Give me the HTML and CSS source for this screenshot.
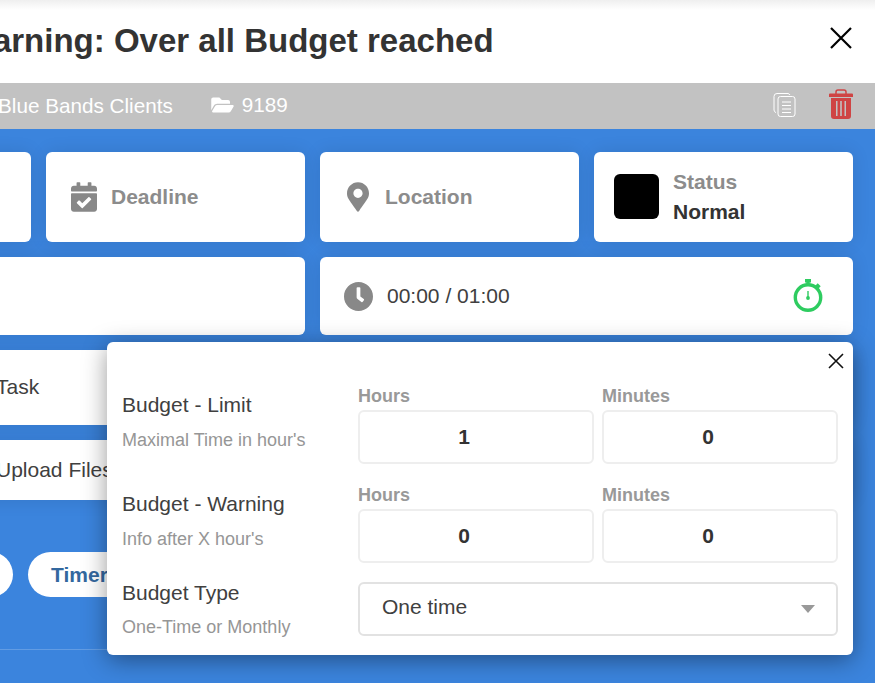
FILE: index.html
```html
<!DOCTYPE html>
<html lang="en">
<head>
<meta charset="utf-8">
<title>Warning: Over all Budget reached</title>
<link rel="stylesheet" href="styles.css">
</head>
<body>
<div class="viewport">
  <main class="modal">
    <header class="head">
      <h1 class="title">Warning: Over all Budget reached</h1>
      <svg class="close-main" viewBox="0 0 24 24"><path d="M2 2l20 20M22 2L2 22"/></svg>
    </header>
    <div class="subbar">
      <span class="client">Blue Bands Clients</span>
      <svg class="folder" viewBox="0 0 576 512"><path d="M572.694 292.093L500.27 416.248A63.997 63.997 0 0 1 444.989 448H45.025c-18.523 0-30.064-20.093-20.731-36.093l72.424-124.155A64 64 0 0 1 152 256h399.964c18.523 0 30.064 20.093 20.73 36.093zM152 224h328v-48c0-26.51-21.49-48-48-48H272l-64-64H48C21.49 64 0 85.49 0 112v278.046l69.077-118.418C86.214 242.25 117.989 224 152 224z"/></svg>
      <span class="number">9189</span>
      <svg class="copy" viewBox="0 0 23 25"><path d="M15 1.500H4a3 3 0 0 0-3 3V18a3 3 0 0 0 2 2.600M15 1.500a3 3 0 0 1 2 1.500"/><rect x="5" y="4.500" width="17" height="20" rx="2.500"/><path d="M9 10h9M9 13.500h9M9 17h9M9 20.500h9"/></svg>
      <svg class="trash" viewBox="0 0 24 30"><path d="M7 5V3a2 2 0 0 1 2-2h6a2 2 0 0 1 2 2v2" class="trash-handle"/><path d="M1 4.500h22a1 1 0 0 1 1 1V8H0V5.500a1 1 0 0 1 1-1z"/><path fill-rule="evenodd" d="M2 9h20v18a3 3 0 0 1-3 3H5a3 3 0 0 1-3-3zM7 12v15h1.500V12zM11.200 12v15h1.600V12zM15.500 12v15H17V12z"/></svg>
    </div>
    <section class="body">
      <div class="grid">
        <div class="card"></div>
        <div class="card field">
          <svg class="ico" viewBox="0 0 448 512"><path d="M436 160H12c-6.627 0-12-5.373-12-12v-36c0-26.51 21.49-48 48-48h48V12c0-6.627 5.373-12 12-12h40c6.627 0 12 5.373 12 12v52h128V12c0-6.627 5.373-12 12-12h40c6.627 0 12 5.373 12 12v52h48c26.51 0 48 21.49 48 48v36c0 6.627-5.373 12-12 12zM12 192h424c6.627 0 12 5.373 12 12v260c0 26.51-21.49 48-48 48H48c-26.51 0-48-21.49-48-48V204c0-6.627 5.373-12 12-12zm333.296 95.947l-28.169-28.398c-4.667-4.705-12.265-4.736-16.97-.068L194.120 364.665l-45.980-46.352c-4.667-4.705-12.266-4.736-16.971-.068l-28.397 28.170c-4.705 4.667-4.736 12.265-.068 16.970l82.601 83.269c4.667 4.705 12.265 4.736 16.970.068l142.953-141.805c4.705-4.667 4.736-12.265.068-16.970z"/></svg>
          <span class="field-label">Deadline</span>
        </div>
        <div class="card field">
          <svg class="ico pin" viewBox="0 0 384 512"><path d="M172.268 501.670C26.970 291.031 0 269.413 0 192 0 85.961 85.961 0 192 0s192 85.961 192 192c0 77.413-26.970 99.031-172.268 309.670-9.535 13.774-29.930 13.773-39.464 0zM192 272c44.183 0 80-35.817 80-80s-35.817-80-80-80-80 35.817-80 80 35.817 80 80 80z"/></svg>
          <span class="field-label">Location</span>
        </div>
        <div class="card status">
          <span class="swatch"></span>
          <div class="status-text">
            <span class="field-label">Status</span>
            <span class="status-value">Normal</span>
          </div>
        </div>
        <div class="card row2 span2"></div>
        <div class="card row2 span2 timer">
          <svg class="clock" viewBox="8 8 496 496"><path d="M256,8C119,8,8,119,8,256S119,504,256,504,504,393,504,256,393,8,256,8Zm92.490,313h0l-20,25a16,16,0,0,1-22.490,2.500h0l-67-49.720a40,40,0,0,1-15-31.230V112a16,16,0,0,1,16-16h32a16,16,0,0,1,16,16V256l58,42.500A16,16,0,0,1,348.490,321Z"/></svg>
          <span class="time">00:00 / 01:00</span>
          <svg class="stopwatch" viewBox="0 0 30 33"><circle cx="15" cy="18.500" r="12.700"/><path d="M12 1.800h6M15 2v4M23.500 5.500l3 3"/><path class="hand" d="M15 12v7"/><circle class="dot" cx="15" cy="19" r="1.900"/></svg>
        </div>
        <div class="card row3 wide"><span class="line-text">Task</span></div>
        <div class="card row4 wide"><span class="line-text">Upload Files</span></div>
      </div>
      <div class="pills">
        <span class="pill pill-first"></span>
        <span class="pill">Timer</span>
      </div>
      <div class="rule"></div>
    </section>
  </main>
  <aside class="popup">
    <svg class="close-pop" viewBox="0 0 16 16"><path d="M1 1l14 14M15 1L1 15"/></svg>
    <div class="pop-grid">
      <div class="pop-label"><strong>Budget - Limit</strong><small>Maximal Time in hour's</small></div>
      <div class="num"><label>Hours</label><div class="box">1</div></div>
      <div class="num"><label>Minutes</label><div class="box">0</div></div>
      <div class="pop-label"><strong>Budget - Warning</strong><small>Info after X hour's</small></div>
      <div class="num"><label>Hours</label><div class="box">0</div></div>
      <div class="num"><label>Minutes</label><div class="box">0</div></div>
      <div class="pop-label third"><strong>Budget Type</strong><small>One-Time or Monthly</small></div>
      <div class="select"><span>One time</span><i class="caret"></i></div>
    </div>
  </aside>
</div>
</body>
</html>
```

FILE: styles.css
```css
* { box-sizing: border-box; }
html, body { margin: 0; padding: 0; }
body { font-family: "Liberation Sans", Arial, sans-serif; color: #333; background: #3b84dd; }

.viewport {
  position: relative;
  width: 875px;
  height: 683px;
  overflow: hidden;
  display: flex;
  justify-content: flex-end;
}
.modal { flex: none; width: 1103px; height: 683px; display: flex; flex-direction: column; }

.head {
  height: 83px;
  flex: none;
  display: flex;
  align-items: center;
  justify-content: space-between;
  padding: 0 22px 1px 191px;
  background: linear-gradient(#efefef 0, #fff 10px);
}
.title { margin: 0; font-size: 33px; line-height: 40px; font-weight: 700; color: #333; white-space: nowrap; }
.close-main { width: 24px; height: 24px; fill: none; stroke: #000; stroke-width: 2.200; margin: -6px 0 0; }

.subbar {
  height: 46px;
  flex: none;
  display: flex;
  align-items: center;
  padding: 0 22px 0 226px;
  background: #c2c2c2;
  color: #fff;
  font-size: 20.700px;
}
.folder { width: 23px; height: 20px; fill: #fff; margin-left: 38px; margin-top: -2px; }
.number { margin-left: 8px; margin-top: -2px; }
.client { margin-top: -1px; }
.copy { width: 23px; height: 25px; fill: none; stroke: #fff; stroke-width: 1; margin-left: auto; margin-top: -4px; }
.trash { width: 24px; height: 30px; fill: #cf4444; margin-left: 33px; margin-top: -4px; }
.trash-handle { fill: none; stroke: #cf4444; stroke-width: 1.500; }

.body { flex: 1; padding: 23px 22px 0 0; display: flex; flex-direction: column; align-items: flex-end; }
.grid { display: grid; grid-template-columns: repeat(4, 259px); gap: 15px; }
.card { background: #fff; border-radius: 6px; height: 90px; box-shadow: 0 0 18px rgba(0, 0, 0, .1); }
.span2 { grid-column: span 2; }
.wide { grid-column: 1 / -1; }
.row2 { height: 78px; }
.row3 { height: 75px; }
.row4 { height: 60px; }

.field { display: flex; align-items: center; padding: 0 25px; gap: 14px; }
.ico { width: 26px; height: 30px; fill: #888; flex: none; }
.pin { width: 22px; margin-left: 2px; margin-right: 2px; }
.field-label { font-size: 21px; font-weight: 700; color: #8c8c8c; line-height: 30px; }
.status { display: flex; align-items: center; padding: 0 20px; gap: 14px; }
.swatch { width: 45px; height: 45px; border-radius: 6px; background: #000; flex: none; margin-top: -2px; }
.status-text { display: flex; flex-direction: column; }
.status-value { font-size: 21px; font-weight: 700; color: #333; line-height: 30px; }

.timer { display: flex; align-items: center; padding: 0 30px 0 24px; }
.clock { width: 29px; height: 29px; fill: #888; flex: none; }
.time { font-size: 21px; margin-left: 14px; color: #404040; }
.stopwatch { width: 30px; height: 33px; margin-left: auto; margin-top: -1px; fill: none; stroke: #2ecc60; stroke-width: 3.400; }
.stopwatch .hand { stroke-width: 1.400; }
.stopwatch .dot { fill: #2ecc60; stroke: none; }

.line-text { display: block; font-size: 21px; white-space: nowrap; color: #404040; }
.row3, .row4 { display: flex; align-items: center; padding-left: 224px; }
.row3 { padding-bottom: 1px; }

.pills { display: flex; gap: 15px; margin-top: 52px; width: 1081px; }
.pill {
  height: 45px;
  border-radius: 23px;
  background: #fff;
  color: #33689f;
  font-size: 21px;
  font-weight: 700;
  line-height: 45px;
  padding: 0 23px;
  width: 120px;
}
.pill-first { width: 241px; }
.rule { width: 1081px; flex: none; height: 1px; margin-top: 52px; background: rgba(255, 255, 255, .2); }

.popup {
  position: absolute;
  left: 107px;
  top: 342px;
  width: 746px;
  height: 313px;
  background: #fff;
  border-radius: 6px;
  box-shadow: 0 5px 25px rgba(0, 0, 0, .4);
  padding: 44px 15px 0;
}
.close-pop { position: absolute; top: 11px; right: 9px; width: 16px; height: 16px; fill: none; stroke: #111; stroke-width: 1.600; }
.pop-grid { display: grid; grid-template-columns: 228px 236px 236px; column-gap: 8px; row-gap: 21px; }
.pop-label { display: flex; flex-direction: column; padding-top: 4px; }
.pop-label strong { font-weight: 400; font-size: 21px; line-height: 30px; color: #404040; }
.pop-label small { font-size: 18px; line-height: 24px; margin-top: 8px; color: #969696; }
.third { padding-top: 0; margin-top: -6px; }
.third small { margin-top: 7px; }
.num label { display: block; font-size: 18px; font-weight: 700; line-height: 20px; color: #999; margin-bottom: 4px; }
.box {
  height: 54px;
  border: 2px solid #eee;
  border-radius: 6px;
  text-align: center;
  padding-right: 24px;
  font-size: 21px;
  font-weight: 700;
  line-height: 50px;
  color: #333;
}
.select {
  grid-column: span 2;
  height: 54px;
  margin-top: -2px;
  border: 2px solid #e2e2e2;
  border-radius: 6px;
  display: flex;
  align-items: center;
  justify-content: space-between;
  padding: 0 21px 4px 22px;
  font-size: 21px;
  color: #404040;
}
.caret { width: 0; height: 0; border-left: 7.500px solid transparent; border-right: 7.500px solid transparent; border-top: 8px solid #999; margin-top: 4px; }
```
